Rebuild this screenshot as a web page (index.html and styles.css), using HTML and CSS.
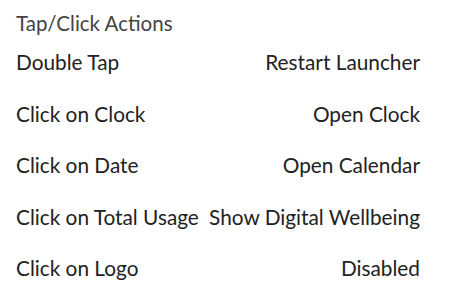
FILE: index.html
```html
<!DOCTYPE html>
<html lang="en">
<head>
    <meta charset="UTF-8">
    <title>Tap/Click Actions</title>
    <link rel="stylesheet" href="styles.css">
</head>
<body>
    <div class="section">
        <h3 class="section-title">Tap/Click Actions</h3>
        <div class="row"><span>Double Tap</span><span>Restart Launcher</span></div>
        <div class="row"><span>Click on Clock</span><span>Open Clock</span></div>
        <div class="row"><span>Click on Date</span><span>Open Calendar</span></div>
        <div class="row"><span>Click on Total Usage</span><span>Show Digital Wellbeing</span></div>
        <div class="row"><span>Click on Logo</span><span>Disabled</span></div>
    </div>
</body>
</html>
```

FILE: styles.css
```css
* {
    margin: 0;
    padding: 0;
    box-sizing: border-box;
}

body {
    background: #fff;
    font-family: Lato, "Open Sans", sans-serif;
    color: #222;
}

.section {
    padding: 11px 31px 0 16px;
}

.section-title {
    font-size: 20.5px;
    font-weight: normal;
    color: #444;
    height: 25px;
}

.row {
    display: flex;
    justify-content: space-between;
    align-items: center;
    font-size: 20.8px;
    height: 51.5px;
}
```
